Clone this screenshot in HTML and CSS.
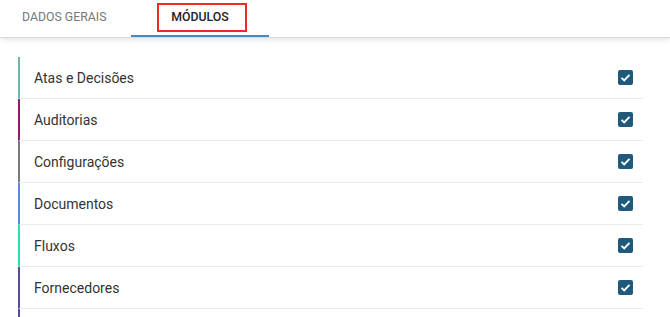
FILE: index.html
```html
<!DOCTYPE html>
<html lang="pt">
<head>
<meta charset="utf-8">
<link rel="stylesheet" href="styles.css">
</head>
<body>
<div class="tabs">
  <div class="tab">DADOS GERAIS</div>
  <div class="tab active"><span class="label">MÓDULOS</span><span class="highlight"></span></div>
</div>
<div class="list">
  <div class="row c1"><span>Atas e Decisões</span><span class="cb"><svg viewBox="0 0 15 15" width="15" height="15"><path d="M3.5 7.8 L6.2 10.4 L11.5 4.8" fill="none" stroke="#fff" stroke-width="1.8"/></svg></span></div>
  <div class="row c2"><span>Auditorias</span><span class="cb"><svg viewBox="0 0 15 15" width="15" height="15"><path d="M3.5 7.8 L6.2 10.4 L11.5 4.8" fill="none" stroke="#fff" stroke-width="1.8"/></svg></span></div>
  <div class="row c3"><span>Configurações</span><span class="cb"><svg viewBox="0 0 15 15" width="15" height="15"><path d="M3.5 7.8 L6.2 10.4 L11.5 4.8" fill="none" stroke="#fff" stroke-width="1.8"/></svg></span></div>
  <div class="row c4"><span>Documentos</span><span class="cb"><svg viewBox="0 0 15 15" width="15" height="15"><path d="M3.5 7.8 L6.2 10.4 L11.5 4.8" fill="none" stroke="#fff" stroke-width="1.8"/></svg></span></div>
  <div class="row c5"><span>Fluxos</span><span class="cb"><svg viewBox="0 0 15 15" width="15" height="15"><path d="M3.5 7.8 L6.2 10.4 L11.5 4.8" fill="none" stroke="#fff" stroke-width="1.8"/></svg></span></div>
  <div class="row c6"><span>Fornecedores</span><span class="cb"><svg viewBox="0 0 15 15" width="15" height="15"><path d="M3.5 7.8 L6.2 10.4 L11.5 4.8" fill="none" stroke="#fff" stroke-width="1.8"/></svg></span></div>
  <div class="row c6 partial"></div>
</div>
</body>
</html>
```
FILE: styles.css
```css
html, body { margin: 0; padding: 0; background: #fff; overflow: hidden; }
body { font-family: Roboto, "Liberation Sans", sans-serif; color: #333; }
.tabs {
  display: flex;
  height: 37px;
  border-bottom: 1px solid #d9d9d9;
  box-shadow: 0 2px 5px rgba(0,0,0,0.10);
}
.tab {
  position: relative;
  width: 131px;
  box-sizing: border-box;
  padding-left: 22px;
  line-height: 34px;
  font-size: 12.3px;
  color: #777;
}
.tab.active {
  width: 138px;
  padding-left: 0;
  text-align: center;
  color: #222;
  font-weight: 500;
  border-bottom: 2px solid #4a8ac4;
  height: 37px;
  box-sizing: border-box;
}
.highlight {
  position: absolute;
  left: 26px;
  top: 3px;
  width: 90px;
  height: 29px;
  box-sizing: border-box;
  border: 2px solid #ee2a24;
}
.list {
  margin: 19px 27px 0 18px;
}
.row {
  display: flex;
  align-items: center;
  justify-content: space-between;
  height: 42px;
  box-sizing: border-box;
  border-left: 2px solid #6bb3b8;
  border-bottom: 1px solid #ebebeb;
  padding: 0 10px 0 14px;
  font-size: 14px;
  color: #333;
}
.row.partial { height: 10px; border-bottom: 0; }
.c1 { border-left-color: #6db5ba; }
.c2 { border-left-color: #8a1f6e; }
.c3 { border-left-color: #7a7a7a; }
.c4 { border-left-color: #5a8ad0; }
.c5 { border-left-color: #2fdcae; }
.c6 { border-left-color: #574c9c; }
.cb {
  width: 15px;
  height: 15px;
  border-radius: 2px;
  background: #1f5a7d;
  display: flex;
}
```
